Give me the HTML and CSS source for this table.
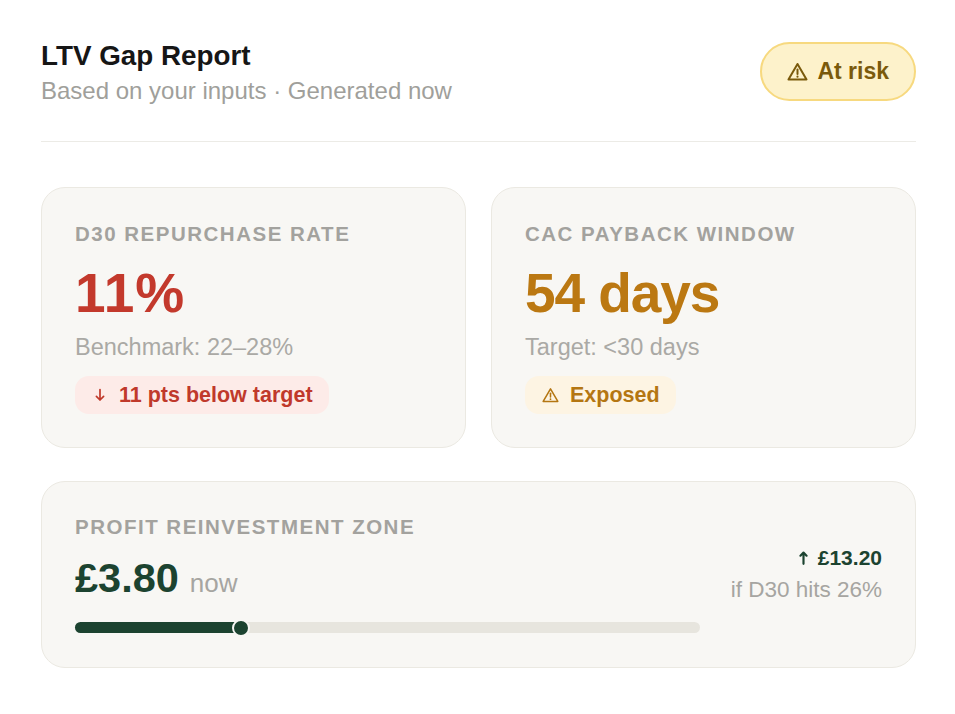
FILE: index.html
```html
<!DOCTYPE html>
<html lang="en">
<head>
<meta charset="utf-8">
<title>LTV Gap Report</title>
<link rel="stylesheet" href="styles.css">
</head>
<body>
<div class="report">
  <header class="report-head">
    <div class="head-text">
      <h1 class="title">LTV Gap Report</h1>
      <p class="subtitle">Based on your inputs · Generated now</p>
    </div>
    <div class="status-badge">
      <svg class="warn-icon warn-icon--badge" viewBox="0 0 20 18" aria-hidden="true">
        <path d="M10 1.8 L18.6 16.6 H1.4 Z" fill="none" stroke="currentColor" stroke-width="1.9" stroke-linejoin="round"/>
        <path d="M10 7 V11.3" stroke="currentColor" stroke-width="1.9" stroke-linecap="round"/>
        <circle cx="10" cy="13.9" r="1.05" fill="currentColor"/>
      </svg>
      <span>At risk</span>
    </div>
  </header>

  <section class="cards">
    <article class="card">
      <div class="card-label">D30 Repurchase rate</div>
      <div class="big-value big-value--red">11%</div>
      <div class="card-note">Benchmark: 22–28%</div>
      <div class="chip chip--red">
        <svg class="arrow-icon arrow-icon--down" viewBox="0 0 10 14" aria-hidden="true">
          <path d="M5 1.5 V12 M1.4 8.4 L5 12 L8.6 8.4" fill="none" stroke="currentColor" stroke-width="1.7" stroke-linecap="round" stroke-linejoin="round"/>
        </svg>
        11 pts below target
      </div>
    </article>

    <article class="card">
      <div class="card-label">CAC payback window</div>
      <div class="big-value big-value--gold">54 days</div>
      <div class="card-note">Target: &lt;30 days</div>
      <div class="chip chip--gold">
        <svg class="warn-icon warn-icon--chip" viewBox="0 0 20 18" aria-hidden="true">
          <path d="M10 1.8 L18.6 16.6 H1.4 Z" fill="none" stroke="currentColor" stroke-width="1.8" stroke-linejoin="round"/>
          <path d="M10 7 V11.3" stroke="currentColor" stroke-width="1.8" stroke-linecap="round"/>
          <circle cx="10" cy="13.9" r="1.05" fill="currentColor"/>
        </svg>
        Exposed
      </div>
    </article>

    <article class="card card--wide">
      <div class="zone-main">
        <div class="card-label">Profit reinvestment zone</div>
        <div class="zone-value"><span class="zone-amount">£3.80</span><span class="zone-now">now</span></div>
        <div class="progress">
          <div class="progress-fill" style="width: 26.6%"></div>
          <div class="progress-knob" style="left: 26.6%"></div>
        </div>
      </div>
      <div class="zone-side">
        <div class="zone-target">
          <svg class="arrow-icon arrow-icon--up" viewBox="0 0 10 16" aria-hidden="true">
            <path d="M5 14.5 V2 M1.6 5.4 L5 2 L8.4 5.4" fill="none" stroke="currentColor" stroke-width="2.4" stroke-linecap="round" stroke-linejoin="round"/>
          </svg>
          <span>£13.20</span>
        </div>
        <div class="zone-cond">if D30 hits 26%</div>
      </div>
    </article>
  </section>
</div>
</body>
</html>
```

FILE: styles.css
```css
* { box-sizing: border-box; }

html, body {
  margin: 0;
  padding: 0;
  background: #ffffff;
}

body {
  font-family: "Liberation Sans", Arial, Helvetica, sans-serif;
  color: #1a1a1a;
}

.report {
  padding: 39px 39px 40px 41px;
}

.report-head {
  display: flex;
  align-items: center;
  justify-content: space-between;
  padding-bottom: 35px;
  border-bottom: 1.5px solid #ecebe6;
}

.title {
  margin: 0;
  font-size: 27.8px;
  line-height: 34px;
  font-weight: 700;
  color: #161616;
}

.subtitle {
  margin: 3px 0 0;
  font-size: 24px;
  line-height: 30px;
  color: #a09f9b;
}

.status-badge {
  display: flex;
  align-items: center;
  gap: 9px;
  height: 59px;
  padding: 0 25px;
  border: 2px solid #f7d97f;
  border-radius: 30px;
  background: #fdf2cb;
  color: #7a5a0b;
  font-size: 23px;
  font-weight: 700;
  margin-top: -3px;
}

.warn-icon { display: block; }
.warn-icon--badge { width: 21px; height: 19px; }
.warn-icon--chip { width: 17px; height: 16px; }

.arrow-icon { display: block; flex: none; }
.arrow-icon--down { width: 10px; height: 14px; margin-right: 14px; }
.arrow-icon--up { width: 9px; height: 16px; margin-right: 10px; }

.cards {
  display: grid;
  grid-template-columns: 1fr 1fr;
  column-gap: 25px;
  row-gap: 33px;
  margin-top: 45px;
}

.card {
  background: #f8f7f4;
  border: 1.5px solid #ebe9e2;
  border-radius: 24px;
  padding: 32.5px 33px;
}

.card--wide {
  grid-column: 1 / span 2;
  display: flex;
  align-items: center;
  gap: 31px;
  padding-bottom: 33.5px;
}

.card-label {
  font-size: 20.5px;
  line-height: 26px;
  font-weight: 700;
  letter-spacing: 1.5px;
  text-transform: uppercase;
  color: #a3a29e;
}

.big-value {
  margin-top: 15.5px;
  font-size: 55px;
  line-height: 62px;
  font-weight: 700;
}
.big-value--red { color: #c3392c; letter-spacing: 0.02em; }
.big-value--gold { color: #bb7812; letter-spacing: -0.02em; }

.card-note {
  margin-top: 8px;
  font-size: 23.5px;
  line-height: 30px;
  color: #aaa9a5;
}

.chip {
  display: inline-flex;
  align-items: center;
  height: 38px;
  margin-top: 14px;
  border-radius: 14px;
  font-size: 21.5px;
  font-weight: 700;
}

.chip--red {
  padding: 0 16px 0 20px;
  background: #fdebe8;
  color: #c0392b;
}

.chip--gold {
  padding: 0 16px 0 17px;
  gap: 11px;
  background: #fdf4e3;
  color: #b47612;
}

.zone-main {
  flex: 1;
  min-width: 0;
}

.zone-value {
  display: flex;
  align-items: baseline;
  gap: 11px;
  margin-top: 14px;
  line-height: 48px;
}

.zone-amount {
  font-size: 41.5px;
  font-weight: 700;
  color: #1c4330;
}

.zone-now {
  font-size: 26px;
  color: #a6a5a1;
}

.progress {
  position: relative;
  height: 11px;
  margin-top: 15px;
  border-radius: 6px;
  background: #e7e5de;
}

.progress-fill {
  height: 100%;
  border-radius: 6px;
  background: #1c4330;
}

.progress-knob {
  position: absolute;
  top: 50%;
  width: 18px;
  height: 18px;
  margin: -9px 0 0 -9px;
  border-radius: 50%;
  background: #1c4330;
  border: 2.5px solid #f8f7f4;
}

.zone-side {
  text-align: right;
}

.zone-target {
  display: flex;
  align-items: center;
  justify-content: flex-end;
  font-size: 21px;
  line-height: 26px;
  font-weight: 700;
  color: #1c4330;
}

.zone-cond {
  margin-top: 6px;
  font-size: 22.5px;
  line-height: 26px;
  color: #a6a5a1;
}
```
